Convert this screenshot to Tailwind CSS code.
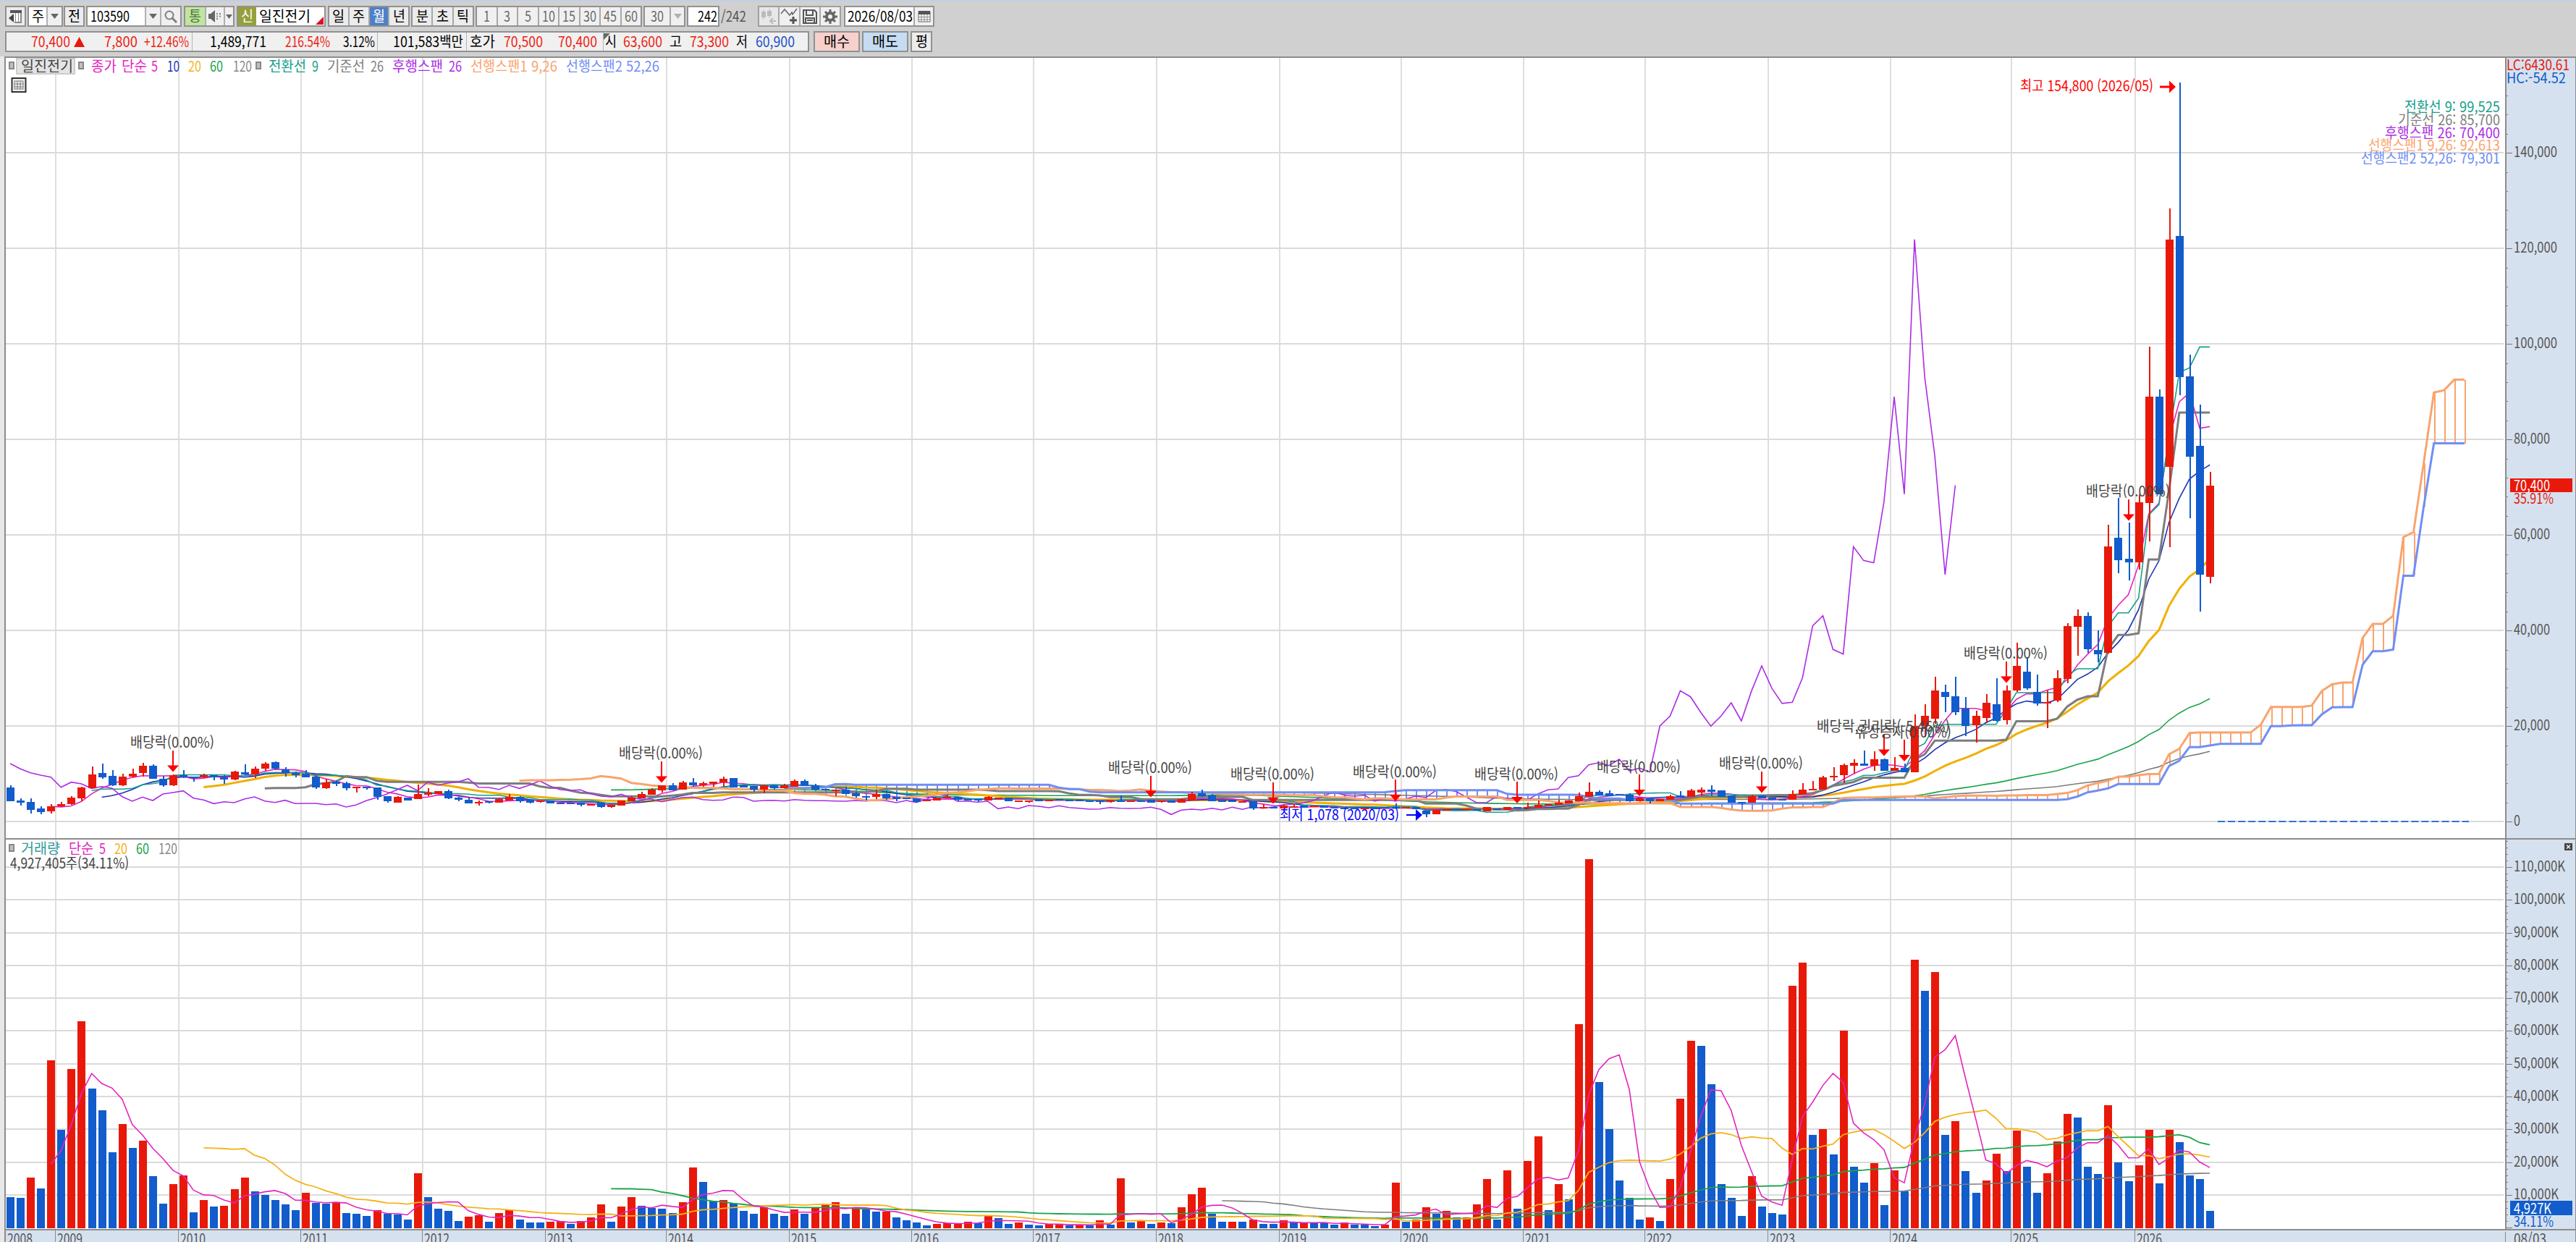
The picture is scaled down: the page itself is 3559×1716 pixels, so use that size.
<!DOCTYPE html>
<html lang="ko">

<head>
    <meta charset="UTF-8">
    <meta name="viewport" content="width=device-width, initial-scale=1.0">
    <title>일진전기 월봉 차트</title>
    <script src="https://cdn.jsdelivr.net/npm/@tailwindcss/browser@4"></script>
</head>

<body class="w-[3559px] h-[1716px] overflow-hidden bg-[#d0d0d0] font-['Liberation_Sans_Narrow','Noto_Sans_CJK_KR',sans-serif] font-normal text-[20px] leading-none text-black">

    <header class="h-[78px] border-t-2 border-[#c3cee4] flex flex-col gap-[6px] pl-[7px] pt-[6px]">

        <!-- Toolbar -->
        <div class="flex h-[29px]">
            <div class="w-[29px] mr-[2px] border-2 border-[#919191] bg-[#ececec] flex items-center justify-center">
                <svg width="19" height="19" viewBox="0 0 19 19"><path d="M6 2h11v16H8" fill="#fff" stroke="#666" stroke-width="1.5"/><path d="M2 1h16v4H2z" fill="#555"/><path d="M0 12l7-6v12z" fill="#444"/><path d="M9.500 5v13M13.500 5v13" stroke="#888"/></svg>
            </div>
            <div class="w-[49px] border-2 border-[#919191] flex mr-px">
                <div class="w-[24px] bg-white flex items-center justify-center"><span data-w="17">주</span></div>
                <div class="flex-1 border-l-2 border-[#b0b0b0] bg-[#f0f0f0] flex items-center justify-center"><svg width="11" height="7"><path d="M0 0h11L5.500 7z" fill="#666"/></svg></div>
            </div>
            <div class="w-[29px] mr-[2px] border-2 border-[#919191] bg-[#ececec] flex items-center justify-center"><span data-w="17">전</span></div>
            <div class="w-[132px] mr-[3px] border-2 border-[#919191] flex">
                <div class="w-[79px] bg-white flex items-center pl-[4px]"><span data-w="54">103590</span></div>
                <div class="w-[21px] border-l-2 border-[#b0b0b0] bg-[#f0f0f0] flex items-center justify-center"><svg width="11" height="7"><path d="M0 0h11L5.500 7z" fill="#666"/></svg></div>
                <div class="flex-1 border-l-2 border-[#b0b0b0] bg-[#f0f0f0] flex items-center justify-center"><svg width="18" height="18" fill="none" stroke="#808080"><circle cx="7" cy="7" r="5.500" stroke-width="2"/><path d="M11 11l6 6" stroke-width="3"/></svg></div>
            </div>
            <div class="w-[70px] mr-[3px] border-2 border-[#919191] flex">
                <div class="w-[27px] bg-[#bfe69e] text-[#4f7040] flex items-center justify-center"><span data-w="17">통</span></div>
                <div class="w-[26px] border-l-2 border-[#b0b0b0] bg-[#f0f0f0] flex items-center justify-center"><svg width="18" height="17"><path d="M0 5h3l6-5v17l-6-5H0z" fill="#666"/><path d="M11 5h2M15 5h2M11 8.500h2M15 8.500h2M11 12h2" stroke="#888" stroke-width="2"/></svg></div>
                <div class="flex-1 border-l-2 border-[#b0b0b0] bg-[#f0f0f0] flex items-center justify-center"><svg width="9" height="6"><path d="M0 0h9L4.500 6z" fill="#666"/></svg></div>
            </div>
            <div class="w-[123px] mr-[3px] border-2 border-[#919191] bg-white flex">
                <div class="w-[25px] bg-[#95a03c] text-white flex items-center justify-center"><span data-w="17">신</span></div>
                <div class="flex-1 flex items-center pl-[4px] relative"><span data-w="71">일진전기</span>
                    <svg class="absolute right-px bottom-px" width="11" height="11"><path d="M11 0v11H0z" fill="#e0102a"/></svg>
                </div>
            </div>
            <div class="w-[113px] mr-[2px] border-2 border-[#919191] bg-[#ececec] flex divide-x-2 divide-[#a8a8a8]">
                <div class="flex-1 flex items-center justify-center"><span data-w="17">일</span></div>
                <div class="flex-1 flex items-center justify-center"><span data-w="17">주</span></div>
                <div class="flex-1 flex items-center justify-center bg-[#4d80c6] text-white"><span data-w="17">월</span></div>
                <div class="flex-1 flex items-center justify-center"><span data-w="17">년</span></div>
            </div>
            <div class="w-[87px] mr-[2px] border-2 border-[#919191] bg-[#ececec] flex divide-x-2 divide-[#a8a8a8]">
                <div class="flex-1 flex items-center justify-center"><span data-w="17">분</span></div>
                <div class="flex-1 flex items-center justify-center"><span data-w="17">초</span></div>
                <div class="flex-1 flex items-center justify-center"><span data-w="17">틱</span></div>
            </div>
            <div class="w-[230px] mr-[2px] border-2 border-[#919191] bg-[#f0f0f0] text-[#6b6b6b] flex divide-x-2 divide-[#a8a8a8]">
                <div class="flex-1 flex items-center justify-center"><span data-w="9">1</span></div>
                <div class="flex-1 flex items-center justify-center"><span data-w="9">3</span></div>
                <div class="flex-1 flex items-center justify-center"><span data-w="9">5</span></div>
                <div class="flex-1 flex items-center justify-center"><span data-w="18">10</span></div>
                <div class="flex-1 flex items-center justify-center"><span data-w="18">15</span></div>
                <div class="flex-1 flex items-center justify-center"><span data-w="18">30</span></div>
                <div class="flex-1 flex items-center justify-center"><span data-w="18">45</span></div>
                <div class="flex-1 flex items-center justify-center"><span data-w="18">60</span></div>
            </div>
            <div class="w-[58px] mr-[2px] border-2 border-[#919191] bg-[#f0f0f0] text-[#6b6b6b] flex">
                <div class="w-[34px] flex items-center justify-center"><span data-w="18">30</span></div>
                <div class="flex-1 border-l-2 border-[#a8a8a8] flex items-center justify-center"><svg width="11" height="7"><path d="M0 0h11L5.500 7z" fill="#b0b0b0"/></svg></div>
            </div>
            <div class="w-[45px] border-2 border-[#919191] bg-white flex items-center justify-end pr-px"><span data-w="27">242</span></div>
            <div class="w-[53px] pl-[2px] text-[#555] flex items-center"><span data-w="35">/242</span></div>
            <div class="w-[115px] mr-[4px] border-2 border-[#a0a0a0] bg-[#f0f0f0] flex divide-x-2 divide-[#a8a8a8]">
                <div class="flex-1 bg-[#e8e8e8] flex items-center justify-center"><svg width="22" height="22"><path d="M4 1v14M12 0v13" stroke="#bbb"/><path d="M1 4h6v8H1zM9 3h6v7H9z" fill="#bbb"/><path d="M21 17h-7M17 13l-4 4 4 4" fill="none" stroke="#bbb" stroke-width="2"/></svg></div>
                <div class="flex-1 flex items-center justify-center"><svg width="24" height="23" fill="none"><path d="M1 8l5-6 7 8 3-4 1 3 6-8" stroke="#666" stroke-width="1.500"/><path d="M18 12v10M13 17h10" stroke="#555" stroke-width="3"/></svg></div>
                <div class="flex-1 flex items-center justify-center"><svg width="20" height="20" fill="none" stroke="#555" stroke-width="2"><path d="M1 1h15l3 3v15H1zM5 1v7h9V1M4 19v-7h12v7M6 15h8"/></svg></div>
                <div class="flex-1 flex items-center justify-center"><svg width="20" height="20" fill="none" stroke="#666"><circle cx="10" cy="10" r="5" stroke-width="4"/><path d="M10 0v4M10 16v4M0 10h4M16 10h4M3 3l3 3M14 14l3 3M17 3l-3 3M6 14l-3 3" stroke-width="3"/></svg></div>
            </div>
            <div class="w-[125px] border-2 border-[#919191] bg-white flex">
                <div class="w-[94px] flex items-center pl-[3px]"><span data-w="90">2026/08/03</span></div>
                <div class="flex-1 border-l-2 border-[#a8a8a8] bg-[#f0f0f0] flex items-center justify-center"><svg width="18" height="17"><path d="M1 2h16v14H1z" fill="#fff" stroke="#666"/><path d="M1 1h16v5H1z" fill="#555"/><path d="M1 9.500h16M1 13h16M5 6v10M9 6v10M13 6v10" stroke="#888"/></svg></div>
            </div>
        </div>

        <!-- Quote strip -->
        <div class="flex h-[29px]">
            <div class="w-[1111px] border-2 border-[#919191] bg-[#f0f0f0] flex items-center">
                <div class="w-[257px] h-full border-r border-[#b5b5b5] flex items-center text-[#ee2211] pl-[34px]">
                    <span data-w="54">70,400</span>
                    <svg class="ml-[5px] mr-[27px]" width="15" height="14"><path d="M7.500 0L15 14H0z" fill="#e8190a"/></svg>
                    <span data-w="46">7,800</span>
                    <span class="ml-[9px]" data-w="62">+12.46%</span>
                </div>
                <div class="w-[256px] h-full border-r border-[#b5b5b5] flex items-center pl-[24px]">
                    <span data-w="78">1,489,771</span>
                    <span class="ml-[26px] text-[#ee2211]" data-w="62">216.54%</span>
                    <span class="ml-[18px]" data-w="44">3.12%</span>
                </div>
                <div class="w-[123px] h-full border-r border-[#b5b5b5] flex items-center pl-[21px]">
                    <span data-w="97">101,583백만</span>
                </div>
                <div class="w-[189px] h-full border-r border-[#b5b5b5] flex items-center pl-[4px]">
                    <span data-w="35">호가</span>
                    <span class="ml-[12px] text-[#ee2211]" data-w="54">70,500</span>
                    <span class="ml-[21px] text-[#ee2211]" data-w="54">70,400</span>
                </div>
                <div class="flex-1 h-full flex items-center relative pl-[2px]">
                    <svg class="absolute left-0 top-px" width="9" height="9"><path d="M0 0h9L0 9z" fill="#666"/></svg>
                    <span data-w="16">시</span>
                    <span class="ml-[9px] text-[#ee2211]" data-w="54">63,600</span>
                    <span class="ml-[10px]" data-w="17">고</span>
                    <span class="ml-[11px] text-[#ee2211]" data-w="54">73,300</span>
                    <span class="ml-[10px]" data-w="16">저</span>
                    <span class="ml-[11px] text-[#1c50c8]" data-w="54">60,900</span>
                </div>
            </div>
            <div class="w-[64px] ml-[6px] border-2 border-[#919191] bg-[#f7d0cc] flex items-center justify-center"><span data-w="36">매수</span></div>
            <div class="w-[64px] ml-[3px] border-2 border-[#919191] bg-[#c5dcf2] flex items-center justify-center"><span data-w="36">매도</span></div>
            <div class="w-[30px] ml-[3px] border-2 border-[#919191] bg-[#ececec] flex items-center justify-center"><span data-w="17">평</span></div>
        </div>
    </header>

    <svg id="chart" class="block" width="3559" height="1638" viewBox="0 78 3559 1638"></svg>

    <script>
        const RED = '#e8190a', BLUE = '#125ccc', MAGENTA = '#e424c0', NAVY = '#1a35b5', YELLOW = '#f0b000';
        const GREEN = '#1aa34a', GRAY = '#7d7d7d', TEAL = '#16a08a', PURPLE = '#ab2ce6', ORANGE = '#f9a46e', SKY = '#6f8ef6';

        // Monthly candles from 2008/08: colour, body top, body bottom, high, low
        // in ticks of 50.5 won, counted down from 20,480
        const early = `b265,322,255,322 b318,326,308,338 b323,357,310,371 b350,367,341,376 r342,362,332,371 r332,342,323,345 r305,334,300,336 r264,308,260,322
            r210,266,178,266 b205,221,165,228 b215,255,192,258 r219,254,207,258 r206,220,187,222 r174,205,161,220 b174,227,169,227 b228,254,215,262
            r214,254,210,259 b212,221,191,226 b220,226,220,240 r213,222,206,226 b214,221,214,233 b221,230,212,248 r197,230,195,234 b202,209,169,214
            r186,211,178,226 r165,185,160,196 b160,187,156,190 b189,203,180,218 b204,213,198,222 b206,221,192,221 b219,263,214,271 r242,267,228,269
            b241,249,233,258 b245,268,241,277 r260,268,260,286 b261,267,261,272 b264,302,264,316 b300,321,300,326 r304,326,301,326 b305,318,305,318
            r291,312,253,312 r285,295,268,300 r278,290,278,290 b278,308,274,313 b306,316,302,322 b314,331,302,331 r323,330,318,339 b322,327,322,331
            r312,326,306,326 r303,318,290,318 b304,320,300,326 b316,326,316,331 r317,322,317,326 b318,331,318,331 b326,330,326,334 b327,330,327,330
            b327,335,327,343 r332,340,332,340 b328,345,323,349 r336,345,336,348 r318,339,318,339 r306,321,300,321 r291,308,283,308 r273,295,268,295
            r255,275,255,285 b255,277,246,277 r242,273,238,273 b242,254,224,261 r246,256,240,262 r241,250,241,260 r228,244,219,257 b224,263,224,263
            b255,264,255,264 b259,272,259,283 r255,272,252,288 b254,268,254,272 r254,266,250,266 r237,262,231,262 b237,258,232,258 b254,273,250,273
            b270,276,270,276 r274,277,274,300 b274,290,262,290 b289,300,283,306 b299,303,299,318 r292,304,276,312 b292,308,292,316 b303,312,303,320
            b307,313,307,313 b310,323,310,327 r314,320,314,320 r306,317,306,317 r304,310,294,310 b303,314,303,320 b312,317,312,317 b313,316,313,323
            r304,317,300,317 r305,310,305,310 b306,321,306,321 r318,321,318,321 r317,321,317,326 b313,320,313,320 r314,318,314,318 b313,317,313,317
            b315,319,315,319 b316,319,316,319 b317,320,317,320 b317,321,317,332 r318,322,318,327 b317,320,296,325 r317,320,317,320 b317,319,317,319
            b315,327,315,327 r318,321,318,326 b317,326,317,326 r312,326,308,326 r290,317,283,317 b288,299,274,303 b297,321,290,321 b317,321,317,321
            b319,325,319,325 r321,325,321,325 b322,352,322,357 r345,347,333,352 b345,352,345,352 r339,352,333,352 r342,346,334,346 b338,348,338,348
            r340,346,340,346 b340,347,340,347 b345,350,345,350 b347,354,347,354 b349,353,349,353 r347,351,347,351 b347,350,347,350 b346,351,346,351
            b346,350,330,350 r346,350,346,350 b346,355,346,355 b359,376,359,388 r358,375,358,375 r354,358,354,358 b352,357,352,357 r350,357,350,357
            b353,357,353,357 r346,362,346,362 b350,355,350,355 r344,356,344,356 b345,350,345,350 r345,348,328,348 r335,348,318,348 r333,340,333,340
            r328,336,315,336 r318,331,318,331 r299,322,284,322 r282,304,243,304 b282,296,276,296 b289,300,277,300 b290,296,290,296 b295,321,288,321
            r308,321,308,321 b309,321,309,330 r312,321,312,321 r300,315,293,315 b297,306,278,306 r277,303,270,303 r272,285,265,300 b274,281,255,300
            b276,304,276,304 b297,327,297,327 b323,326,323,335 r300,327,293,327 b296,310,296,310 b306,314,306,314 b312,316,312,316 r291,316,277,316
            r274,294,246,294 r270,275,238,275 r223,273,215,273 r215,220,180,236 r170,213,165,245 r161,173,148,208 b166,173,112,173 r147,175,115,195
            b147,195,144,195 r184,196,138,196 b184,200,165,200 r9,200,-38,200 r-32,10,-82,55 r-137,-20,-195,0 b-131,-112,-163,-47 b-114,-48,-195,-35
            b-63,10,-110,52 r-32,5,-55,79 r-87,-25,-122,-2 b-82,-12,-190,-10 r-137,-15,-158,2`;

        // From 2025/01 on: open, high, low, close in won
        const late = [
            [27400, 37500, 27200, 32600], [31400, 34500, 27600, 27900], [27100, 30800, 24200, 24750], [24800, 27400, 19650, 25000],
            [25400, 31650, 25100, 30100], [29900, 41600, 29000, 41000], [40800, 44350, 34800, 43100], [43100, 43770, 35360, 36050],
            [36000, 40100, 33300, 35070], [35360, 62140, 35200, 57560], [59400, 67770, 51940, 54660], [55100, 62550, 50550, 54200],
            [54200, 68460, 52800, 66900], [66720, 99400, 58700, 88940], [88940, 90500, 68580, 68580], [74260, 128350, 57400, 121900],
            [122600, 154800, 89200, 93060], [93280, 97780, 63500, 76450], [78700, 87370, 43940, 51700], [51300, 73200, 49900, 70400]
        ];

        // Volume, 73.6K per unit
        const vol = [129, 125, 211, 166, 697, 409, 661, 859, 580, 490, 315, 431, 332, 364, 215, 103, 184, 220, 67, 117, 90, 92, 161, 211, 153, 139,
            117, 99, 76, 148, 104, 103, 107, 62, 61, 50, 76, 59, 57, 36, 229, 130, 81, 72, 31, 49, 54, 27, 63, 74, 36, 24, 23, 27, 31, 17, 31, 44, 99, 27,
            90, 130, 94, 84, 81, 63, 108, 252, 193, 111, 117, 101, 72, 59, 88, 59, 50, 77, 59, 84, 96, 108, 59, 83, 78, 68, 69, 45, 32, 23, 13, 18, 21, 22,
            27, 21, 51, 41, 18, 23, 14, 13, 17, 18, 12, 13, 12, 32, 14, 207, 23, 29, 18, 23, 22, 86, 140, 167, 59, 27, 28, 27, 36, 18, 17, 32, 23, 24, 21, 20,
            14, 23, 15, 14, 9, 15, 189, 27, 36, 86, 59, 72, 45, 46, 99, 203, 37, 239, 81, 279, 382, 76, 184, 121, 845, 1530, 607, 412, 197, 126, 35, 45, 31,
            203, 536, 778, 756, 598, 184, 126, 50, 216, 89, 63, 58, 1004, 1102, 387, 410, 305, 819, 256, 188, 270, 95, 239, 152, 1112, 985, 1061, 387, 445,
            238, 148, 197, 310, 238, 404, 256, 148, 229, 359, 473, 458, 256, 225, 509, 274, 194, 261, 409, 185, 409, 356, 220, 203, 71];

        const candles = early.trim().split(/\s+/).map(s => {
            const [t, b, h, l] = s.slice(1).split(',').map(v => (405.6 - v) * 50.5);
            return s[0] === 'r' ? { o: b, c: t, h, l } : { o: t, c: b, h, l };
        }).concat(late.map(([o, h, l, c]) => ({ o, h, l, c })));

        const X = i => 14 + i * 14.07;
        const Y = p => 1135.2 - p * 0.0066;
        const V = v => 1697 - v / 3;

        let out = '';
        const rect = (x, y, w, h, fill, extra = '') => out += `<rect x="${x}" y="${y}" width="${w}" height="${h}" fill="${fill}" shape-rendering="crispEdges" ${extra}/>`;
        const text = (x, y, w, s, fill) => out += `<text x="${x}" y="${y + 7.5}" font-size="20" fill="${fill}" textLength="${w}" lengthAdjust="spacingAndGlyphs">${s}</text>`;
        const line = (pts, color, w) => out += `<polyline points="${pts.map(p => p[0].toFixed(1) + ',' + p[1].toFixed(1)).join(' ')}" fill="none" stroke="${color}" stroke-width="${w}"/>`;

        function sma(arr, n) {
            const res = [];
            for (let i = n - 1; i < arr.length; i++) {
                let sum = 0;
                for (let k = 0; k < n; k++) sum += arr[i - k];
                res.push([i, sum / n]);
            }
            return res;
        }

        function mid(n) {
            const res = [];
            for (let i = n - 1; i < candles.length; i++) {
                const part = candles.slice(i - n + 1, i + 1);
                res[i] = (Math.max(...part.map(c => c.h)) + Math.min(...part.map(c => c.l))) / 2;
            }
            return res;
        }

        // Panels
        rect(0, 78, 6, 1638, '#e8e8e8');
        rect(6, 78, 3553, 1638, '#ffffff');
        rect(3461, 78, 98, 1638, '#d6e1ef');
        rect(6, 1699, 3553, 17, '#d6e1ef');

        // Grid
        const years = [77, 247, 416, 584, 754, 921, 1091, 1260, 1428, 1598, 1768, 1936, 2105, 2273, 2443, 2612, 2779, 2950];
        years.forEach(x => rect(x - 1, 80, 2, 1618, '#dedede'));
        for (let p = 0; p <= 140000; p += 20000) rect(8, Math.round(Y(p)) - 1, 3451, 2, '#dadada');
        for (let m = 10; m <= 110; m += 10) rect(8, Math.round(1696.2 - m * 4.529) - 1, 3451, 2, '#dadada');

        // Ichimoku
        const closes = candles.map(c => c.c);
        const tenkan = mid(9), kijun = mid(26), wide = mid(52);
        const span1 = [], span2 = [];
        for (let i = 0; i < candles.length; i++) {
            if (kijun[i] !== undefined) span1.push([i + 25, (tenkan[i] + kijun[i]) / 2]);
            if (wide[i] !== undefined) span2.push([i + 25, wide[i]]);
        }
        const toXY = list => list.map(([i, p]) => [X(i), Y(p)]);
        const lookup = Object.fromEntries(span1);
        span2.forEach(([i, p]) => {
            const a = Y(lookup[i]), b = Y(p);
            rect(Math.round(X(i)), Math.min(a, b), 1.5, Math.abs(a - b), a < b ? ORANGE : SKY);
        });

        line(toXY(sma(closes, 120)), GRAY, 1.6);
        line(toXY(sma(closes, 60)), GREEN, 1.6);
        line(toXY(sma(closes, 20)), YELLOW, 3);
        line(toXY(sma(closes, 10)), NAVY, 1.6);
        line(toXY(sma(closes, 5)), MAGENTA, 1.6);
        line(toXY(tenkan.map((p, i) => [i, p]).filter(Boolean)), TEAL, 1.6);
        line(toXY(kijun.map((p, i) => [i, p]).filter(Boolean)), GRAY, 3);
        line(toXY(closes.slice(25).map((p, i) => [i, p])), PURPLE, 1.6);
        line(toXY(span1), ORANGE, 3);
        line(toXY(span2), SKY, 3);

        // Candles
        candles.forEach((c, i) => {
            const color = c.c > c.o ? RED : BLUE, x = Math.round(X(i));
            const top = Y(Math.max(c.o, c.c)), bottom = Y(Math.min(c.o, c.c));
            rect(x, Y(c.h), 1.5, Y(c.l) - Y(c.h), color);
            rect(x - 5, top, 11, Math.max(2, bottom - top), color);
        });

        rect(6, 1158, 3553, 2, '#8c8c8c');

        // Volume bars
        vol.forEach((v, i) => rect(Math.round(X(i)) - 5, V(v), 11, v / 3, i > 0 && v > vol[i - 1] ? RED : BLUE));
        const volXY = list => list.map(([i, v]) => [X(i), V(v)]);
        line(volXY(sma(vol, 120)), GRAY, 1.6);
        line(volXY(sma(vol, 60)), GREEN, 1.8);
        line(volXY(sma(vol, 20)), '#f5b21a', 1.8);
        line(volXY(sma(vol, 5)), MAGENTA, 1.6);

        // Zero line of the projected months
        out += `<line x1="3064" y1="1135" x2="3411" y2="1135" stroke="#2f72d8" stroke-width="2" stroke-dasharray="10 4.07"/>`;

        // Corporate event marks: candle index, arrow tip y, label, label width
        const marks = [[16, 1066.5], [64, 1081.5], [112, 1101.5], [124, 1110.5], [136, 1107], [148, 1110], [160, 1100], [172, 1095.5],
            [184, 1044.5, '배당락,권리락(-5.46%)', 184], [186, 1052, '유상증자(0.00%)', 132], [196, 943.5], [208, 719.5]];
        marks.forEach(([i, tip, label = '배당락(0.00%)', w = 116]) => {
            const x = Math.round(X(i));
            text(x - w / 2 - 1, tip - 41, w, label, '#444');
            rect(x - 1, tip - 30, 2, 22, '#ff0000');
            out += `<path d="M${x - 8} ${tip - 9}h16l-8 9z" fill="#ff0000"/>`;
        });
        text(2791, 118, 184, '최고 154,800 (2026/05)', '#ff0000');
        out += `<path d="M2984 118.500h13v-7l9 8.500-9 8.500v-7h-13z" fill="#ff0000"/>`;
        text(1768, 1125, 165, '최저 1,078 (2020/03)', '#0000ff');
        out += `<path d="M1943 1125h13v-7l9 8-9 8v-7h-13z" fill="#0000ff"/>`;

        // Legends
        const box = (x, y) => rect(x, y, 6, 9, '#c0c0c0', 'stroke="#888" stroke-width="1.5"');
        rect(23, 81, 80, 21, '#e4e4e4', 'stroke="#cccccc" stroke-width="2"');
        [13, 109, 354].forEach(x => box(x, 86));
        [[29, 72, '일진전기', '#444'], [126, 35, '종가', MAGENTA], [168, 35, '단순', MAGENTA], [209, 9, '5', MAGENTA], [231, 17, '10', NAVY],
            [260, 18, '20', '#f5b21a'], [290, 18, '60', GREEN], [322, 26, '120', '#888'], [371, 52, '전환선', TEAL], [431, 9, '9', TEAL],
            [452, 52, '기준선', '#808080'], [512, 18, '26', '#808080'], [542, 70, '후행스팬', PURPLE], [620, 18, '26', PURPLE],
            [650, 120, '선행스팬1 9,26', ORANGE], [782, 129, '선행스팬2 52,26', SKY]
        ].forEach(([x, w, s, color]) => text(x, 91, w, s, color));
        out += `<g fill="none" stroke="#333"><rect x="16.500" y="108" width="19" height="19" fill="#eee" stroke-width="2"/><path d="M20 112h12v11H20zM24 112v11M28 112v11M20 116h12M20 120h12" stroke="#777"/></g>`;

        box(13, 1167);
        [[29, 54, '거래량', '#359c9c'], [95, 34, '단순', MAGENTA], [137, 9, '5', MAGENTA], [158, 18, '20', '#f5b21a'], [188, 18, '60', GREEN], [219, 26, '120', '#888']
        ].forEach(([x, w, s, color]) => text(x, 1172, w, s, color));
        text(14, 1192, 164, '4,927,405주(34.11%)', '#444');

        [[3322, 147, '전환선 9: 99,525', TEAL], [3313, 165, '기준선 26: 85,700', '#808080'], [3295, 183, '후행스팬 26: 70,400', PURPLE],
            [3272, 200, '선행스팬1 9,26: 92,613', ORANGE], [3262, 218, '선행스팬2 52,26: 79,301', SKY]
        ].forEach(([x, y, s, color]) => text(x, y, 3454 - x, s, color));

        // Right axis
        rect(3461, 78, 2, 1622, '#8c8c8c');
        for (let p = 0; p <= 152000; p += 4000) {
            const major = p % 20000 === 0;
            rect(3463, Math.round(Y(p)), major ? 8 : 2, 1, '#777');
            if (major) text(3473, Y(p) - 2, p >= 100000 ? 60 : p ? 50 : 9, p.toLocaleString('en-US'), '#555');
        }
        for (let m = 0; m <= 118; m += 2) {
            const y = Math.round(1696.2 - m * 4.529);
            rect(3463, y, m % 10 ? 2 : 8, 1, '#777');
            if (m && m % 10 === 0) text(3473, y - 2, m >= 100 ? 71 : 62, m + ',000K', '#555');
        }
        text(3463, 89, 87, 'LC:6430.61', RED);
        text(3463, 107, 82, 'HC:-54.52', BLUE);
        rect(3468, 661, 86, 19, RED);
        text(3473, 670, 50, '70,400', '#ffffff');
        text(3473, 688, 55, '35.91%', RED);
        rect(3468, 1659, 86, 20, BLUE);
        text(3473, 1669, 52, '4,927K', '#ffffff');
        text(3473, 1687, 55, '34.11%', BLUE);
        rect(3543, 1165, 11, 10, '#444444');
        out += `<path d="M3546 1167.500l5 5M3551 1167.500l-5 5" stroke="#fff" stroke-width="1.300"/>`;

        // Date axis
        rect(6, 1698, 3553, 2, '#8c8c8c');
        text(10, 1711, 35, '2008', '#555');
        years.forEach((x, i) => {
            rect(x - 1, 1699, 1, 17, '#888');
            text(x + 2, 1711, 35, 2009 + i, '#555');
        });
        rect(3461, 1702, 1, 14, '#888');
        text(3473, 1711, 45, '08/03', '#555');

        // Frame
        rect(6, 78, 3553, 2, '#8c8c8c');
        rect(6, 78, 2, 1638, '#8c8c8c');
        rect(3558, 78, 1, 1638, '#8c8c8c');

        document.getElementById('chart').innerHTML = out;

        document.querySelectorAll('[data-w]').forEach(el => {
            const w = el.dataset.w;
            el.innerHTML = `<svg width="${w}" height="24" overflow="visible"><text x="0" y="19" font-size="20" fill="currentColor" textLength="${w}" lengthAdjust="spacingAndGlyphs">${el.textContent}</text></svg>`;
        });
    </script>

</body>

</html>
